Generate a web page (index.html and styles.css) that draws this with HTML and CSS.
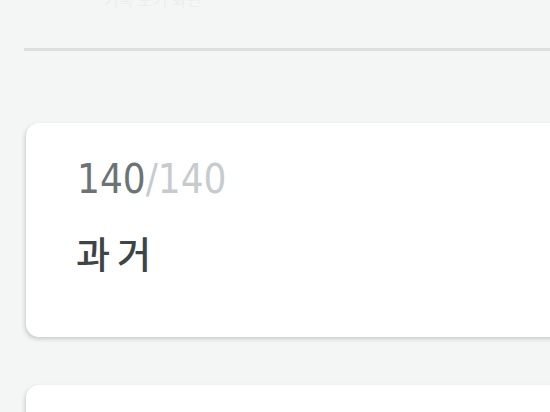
FILE: index.html
```html
<!DOCTYPE html>
<html lang="ko">
<head>
<meta charset="utf-8">
<link rel="stylesheet" href="styles.css">
</head>
<body>
<div class="page">
  <header class="top">
    <div class="ghost">기록 보기 화면</div>
  </header>
  <div class="divider"></div>
  <section class="card">
    <div class="count"><span class="cur">140</span><span class="max">/140</span></div>
    <div class="title">과거</div>
  </section>
  <section class="card next"></section>
</div>
</body>
</html>
```

FILE: styles.css
```css
html, body {
  margin: 0;
  padding: 0;
  background: #f3f6f5;
  overflow: hidden;
  width: 550px;
  height: 412px;
}
.page {
  display: flex;
  flex-direction: column;
  width: 550px;
}
.top {
  height: 48px;
  display: flex;
  align-items: flex-start;
  padding-left: 104px;
}
.ghost {
  margin-top: -13px;
  font-family: "Noto Sans CJK KR", "Noto Sans", sans-serif;
  font-size: 16px;
  color: #eaeeed;
}
.divider {
  margin-left: 24px;
  height: 3px;
  background: #dcdfe0;
}
.card {
  margin-top: 72px;
  margin-left: 26px;
  width: 560px;
  height: 214px;
  box-sizing: border-box;
  background: #ffffff;
  border-radius: 13px;
  box-shadow: -1px 2px 4px rgba(0, 0, 0, 0.18);
  padding: 31px 0 0 51px;
  display: flex;
  flex-direction: column;
}
.card.next {
  margin-top: 48px;
}
.count {
  font-family: "DejaVu Sans Condensed", "DejaVu Sans", sans-serif;
  font-stretch: condensed;
  font-size: 40px;
  line-height: 50px;
  font-weight: 300;
}
.cur { color: #6c7376; }
.max { color: #c6ccce; }
.title {
  margin-top: 28px;
  font-family: "Noto Sans CJK KR", sans-serif;
  font-size: 37px;
  line-height: 42px;
  font-weight: 500;
  color: #3d4446;
  letter-spacing: 7px;
  margin-left: -1px;
}
```
